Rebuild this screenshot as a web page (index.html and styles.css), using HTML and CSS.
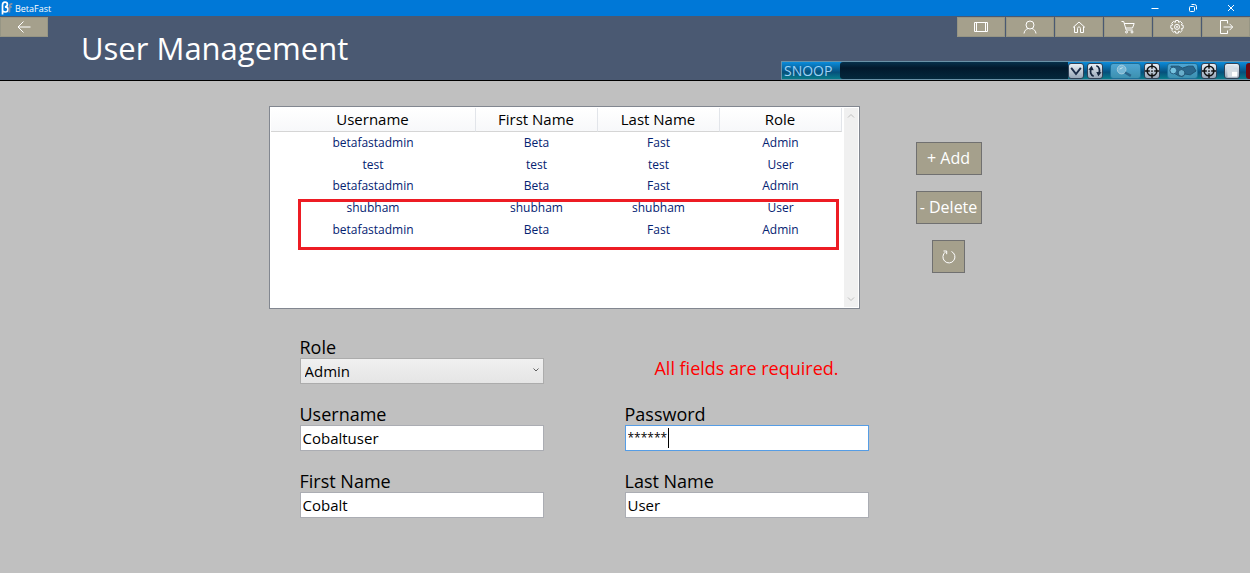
FILE: index.html
```html
<!DOCTYPE html>
<html lang="en">
<head>
<meta charset="utf-8">
<title>BetaFast</title>
<link rel="stylesheet" href="styles.css">
</head>
<body>
<div class="titlebar">
  <svg class="app-logo" viewBox="0 0 12 14" aria-hidden="true">
    <path d="M1.500 13.500V4.200C1.500 2.200 2.600 1.200 4 1.200s2.400.9 2.400 2.200S5.400 5.600 4 5.800c1.900 0 3 1 3 2.500S5.900 11 4.300 11c-1 0-1.800-.3-2.300-.8" fill="none" stroke="#fff" stroke-width="1.700"/>
    <path d="M8.300 11.500l.4-6.500c.1-1.500.8-2.200 2.600-2M7.700 6h3" fill="none" stroke="#8b8fa3" stroke-width="1.800"/>
  </svg>
  <span class="app-name">BetaFast</span>
  <div class="window-controls">
    <button type="button" aria-label="Minimize"><svg viewBox="0 0 10 10"><path d="M1.500 5.500h7"/></svg></button>
    <button type="button" aria-label="Restore"><svg viewBox="0 0 10 10"><rect x="1.500" y="3.500" width="5" height="5" rx="1"/><path d="M3.500 1.500h3a2 2 0 0 1 2 2v3"/></svg></button>
    <button type="button" aria-label="Close"><svg viewBox="0 0 10 10"><path d="M2 2l6 6M8 2L2 8"/></svg></button>
  </div>
</div>

<header class="header">
  <button class="tile" type="button" aria-label="Back"><svg viewBox="0 0 16 16"><path d="M14.500 8H2M7.500 2.500L2 8l5.500 5.500"/></svg></button>
  <h1>User Management</h1>
  <nav class="nav" aria-label="Main">
    <button class="tile" type="button" aria-label="Movies"><svg viewBox="0 0 16 16"><path d="M1.500 3.500h13v9h-13zM3.500 3.500v9M12.500 3.500v9"/></svg></button>
    <button class="tile" type="button" aria-label="Account"><svg viewBox="0 0 16 16"><circle cx="8" cy="6" r="4"/><path d="M2 14.500c.4-2.600 1.800-4.200 4-5M14 14.500c-.4-2.600-1.800-4.200-4-5"/></svg></button>
    <button class="tile" type="button" aria-label="Home"><svg viewBox="0 0 16 16"><path d="M2 8.500l6-5.500 6 5.500M3.500 7.500v6h3v-4c0-1 .6-1.500 1.500-1.500s1.500.5 1.500 1.500v4h3v-6"/></svg></button>
    <button class="tile" type="button" aria-label="Cart"><svg viewBox="0 0 16 16"><path d="M1.500 2.500h2.200l2.500 8.500h6.500M4.200 4.500h10l-1.700 4.500H5.600"/><circle cx="6.500" cy="13" r="1"/><circle cx="12" cy="13" r="1"/></svg></button>
    <button class="tile" type="button" aria-label="Settings"><svg viewBox="0 0 16 16"><path d="M6.700 1.500h2.600l.4 1.900 1.700-1 1.900 1.900-1 1.700 1.900.4v2.800l-1.900.4 1 1.700-1.900 1.900-1.700-1-.4 1.900H6.700l-.4-1.900-1.700 1-1.900-1.900 1-1.700-1.900-.4V6.400L3.700 6l-1-1.700 1.900-1.900 1.700 1z"/><circle cx="8" cy="7.900" r="2.500"/><circle cx="8" cy="7.900" r=".6"/></svg></button>
    <button class="tile" type="button" aria-label="Log out"><svg viewBox="0 0 16 16"><path d="M9.500 4.500v-3h-7v13h7v-3M5.500 8h9M11.500 4.800L14.700 8l-3.200 3.200"/></svg></button>
  </nav>
</header>

<div class="snoop">
  <span class="snoop-name">SNOOP</span>
  <div class="snoop-path"></div>
  <button type="button" class="snoop-btn" aria-label="Choose window"><svg viewBox="0 0 16 16"><path d="M2.500 4.500l5.500 7 5.500-7" fill="none" stroke="#1c2c48" stroke-width="2.200"/></svg></button>
  <button type="button" class="snoop-btn" aria-label="Refresh list"><svg viewBox="0 0 16 16"><path d="M6.500 14C3 13 2 9 3.500 5.500M9.500 2c3.500 1 4.500 5 3 8.500" fill="none" stroke="#14243c" stroke-width="2"/><path d="M.5 6.500L4.200 2 6.500 7zM15.500 9.500L11.800 14 9.500 9z" fill="#14243c"/></svg></button>
  <button type="button" class="snoop-btn wide" aria-label="Snoop"><svg viewBox="0 0 30 14"><circle cx="11" cy="5.500" r="4.500" fill="#78b8d6" stroke="#a6cbdc"/><path d="M14.500 8.500l6 3.500" stroke="#2a6489" stroke-width="2.500"/><path d="M9 5l3-1.500" stroke="#cde9f3"/></svg></button>
  <button type="button" class="snoop-btn" aria-label="Snoop target"><svg viewBox="0 0 16 16"><circle cx="8" cy="8" r="5.500" fill="none" stroke="#111" stroke-width="1.800"/><path d="M8 0v5.500M8 10.500V16M0 8h5.500M10.500 8H16" stroke="#111" stroke-width="1.600"/><circle cx="8" cy="8" r="1" fill="#111"/></svg></button>
  <button type="button" class="snoop-btn wide" aria-label="Magnify"><svg viewBox="0 0 30 14"><path d="M3 2h8l4 2 6-2h5l3 5-6 4-6-1-2 3-4-1-5-3z" fill="#2a668b" stroke="#205473"/><circle cx="5.500" cy="6.500" r="3.500" fill="#76c2df" stroke="#265b7d"/><circle cx="14" cy="9" r="3.500" fill="#69aecb" stroke="#205473"/></svg></button>
  <button type="button" class="snoop-btn" aria-label="Magnify target"><svg viewBox="0 0 16 16"><circle cx="8" cy="8" r="5.500" fill="none" stroke="#111" stroke-width="1.800"/><path d="M8 0v5.500M8 10.500V16M0 8h5.500M10.500 8H16" stroke="#111" stroke-width="1.600"/><circle cx="8" cy="8" r="1" fill="#111"/></svg></button>
  <button type="button" class="snoop-btn last" aria-label="Options"><svg viewBox="0 0 16 16"><path d="M2 2h8v4h4v9H3z" fill="#d5dce3"/><rect x="8" y="9" width="6" height="5" fill="#fff"/></svg></button>
  <button type="button" class="snoop-close" aria-label="Close Snoop"></button>
</div>

<main class="page">
  <section class="list">
    <table>
      <colgroup><col class="col-wide"><col><col><col></colgroup>
      <thead><tr><th>Username</th><th>First Name</th><th>Last Name</th><th>Role</th></tr></thead>
      <tbody>
        <tr><td>betafastadmin</td><td>Beta</td><td>Fast</td><td>Admin</td></tr>
        <tr><td>test</td><td>test</td><td>test</td><td>User</td></tr>
        <tr><td>betafastadmin</td><td>Beta</td><td>Fast</td><td>Admin</td></tr>
        <tr><td>shubham</td><td>shubham</td><td>shubham</td><td>User</td></tr>
        <tr><td>betafastadmin</td><td>Beta</td><td>Fast</td><td>Admin</td></tr>
      </tbody>
    </table>
    <div class="scrollbar" aria-hidden="true">
      <svg viewBox="0 0 8 6"><path d="M1 4.500l3-3 3 3"/></svg>
      <svg viewBox="0 0 8 6"><path d="M1 1.500l3 3 3-3"/></svg>
    </div>
    <div class="highlight"></div>
  </section>

  <aside class="actions">
    <button type="button">+ Add</button>
    <button type="button">- Delete</button>
    <button type="button" class="square" aria-label="Refresh"><svg viewBox="0 0 16 16"><path d="M10.500 2.500A6 6 0 1 1 4.500 3M2.500 2h3.200v3.200"/></svg></button>
  </aside>

  <form class="form">
    <div class="field">
      <label for="role">Role</label>
      <div class="control">
        <select id="role"><option>Admin</option><option>User</option></select>
        <svg class="chevron" viewBox="0 0 8 6" aria-hidden="true"><path d="M1.500 1.500L4 4l2.500-2.500"/></svg>
      </div>
    </div>
    <p class="message">All fields are required.</p>
    <div class="field">
      <label for="username">Username</label>
      <input id="username" type="text" value="Cobaltuser">
    </div>
    <div class="field">
      <label for="password">Password</label>
      <div class="control">
        <input id="password" class="active" type="text" value="******" autocomplete="off">
        <span class="caret"></span>
      </div>
    </div>
    <div class="field">
      <label for="first">First Name</label>
      <input id="first" type="text" value="Cobalt">
    </div>
    <div class="field">
      <label for="last">Last Name</label>
      <input id="last" type="text" value="User">
    </div>
  </form>
</main>
</body>
</html>
```
FILE: styles.css
```css
* { box-sizing: border-box; }
body {
  margin: 0;
  min-height: 100vh;
  position: relative;
  background: #c0c0c0;
  color: #000;
  font-family: "Open Sans", "Noto Sans", sans-serif;
}
button, input, select { font: inherit; color: inherit; margin: 0; padding: 0; border: 0; border-radius: 0; }
svg { display: block; }

.titlebar {
  display: flex;
  align-items: center;
  height: 16px;
  background: #0078d7;
  color: #fff;
  font-size: 9px;
}
.app-logo { width: 12px; height: 14px; margin: 0 2px 0 1px; }
.window-controls { display: flex; margin-left: auto; }
.window-controls button { width: 38px; height: 16px; display: grid; place-items: center; background: none; }
.window-controls svg { width: 10px; height: 10px; fill: none; stroke: #fff; stroke-width: 1; }

.header {
  display: flex;
  align-items: flex-start;
  height: 65px;
  background: #4a5972;
  border-bottom: 1px solid #000;
  padding-top: 1px;
}
.header h1 {
  margin: 8px 0 0 33px;
  color: #fff;
  font-size: 31px;
  line-height: 46px;
  font-weight: 400;
}
.nav { display: flex; gap: 1px; margin-left: auto; }
.tile {
  width: 48px;
  height: 20px;
  display: grid;
  place-items: center;
  background: #a5a08c;
  border: 1px solid #969584;
}
.tile svg { width: 16px; height: 16px; fill: none; stroke: #fff; stroke-width: 1; }

.snoop {
  position: absolute;
  top: 61px;
  right: 0;
  width: 469px;
  height: 19px;
  display: flex;
  align-items: center;
  overflow: hidden;
  background: linear-gradient(#0b8cdc, #06507c 60%, #087d8c);
  border: solid #6a92a8;
  border-width: 1px 0 1px 1px;
}
.snoop-name { width: 58px; padding-left: 2px; color: #9dd0f5; font-size: 14px; line-height: 17px; }
.snoop-path { flex: 1; height: 17px; background: linear-gradient(#06304b, #02192d 35%, #04283c); border-radius: 3px 0 0 3px; }
.snoop-btn {
  width: 16px;
  height: 16px;
  margin-right: 3px;
  flex: none;
  border: 1px solid #2f4258;
  border-radius: 3px;
  background: linear-gradient(#e8eef4, #97a6b8);
}
.snoop-btn svg { width: 100%; height: 100%; }
.snoop-btn.wide { width: 31px; margin-left: 4px; background: linear-gradient(#4fa5d3, #3d91b0); border-color: #1d719c; }
.snoop-btn.last { margin: 0 6px 0 4px; }
.snoop-close { width: 4px; height: 16px; background: #6d0a10; border-radius: 3px 0 0 3px; }

.page {
  display: grid;
  grid-template-columns: 591px 66px;
  column-gap: 56px;
  row-gap: 28px;
  justify-content: center;
  align-items: start;
  padding: 25px 16px;
}

.list {
  position: relative;
  display: flex;
  justify-content: space-between;
  min-height: 203px;
  background: #fff;
  border: 1px solid #828790;
  padding: 1px;
}
.list table {
  flex: none;
  width: 571px;
  height: 132px;
  table-layout: fixed;
  border-collapse: separate;
  border-spacing: 0;
  align-self: flex-start;
  text-align: center;
}
.col-wide { width: 205px; }
.list th {
  height: 24px;
  padding: 0;
  font-size: 15px;
  line-height: 23px;
  font-weight: 400;
  background: linear-gradient(#fff, #f7f8fa);
  border-right: 1px solid #e2e5ea;
  border-bottom: 1px solid #d5d5d5;
}
.list td { padding: 0; font-size: 12px; line-height: 21px; color: #042271; }
.scrollbar {
  width: 14px;
  display: flex;
  flex-direction: column;
  justify-content: space-between;
  align-items: center;
  padding: 5px 0;
  background: #f0f0f0;
}
.scrollbar svg { width: 8px; height: 6px; fill: none; stroke: #bfbfbf; }
.highlight {
  position: absolute;
  left: 28px;
  right: 20px;
  top: 92px;
  height: 51px;
  border: 3px solid #ed1c24;
}

.actions { display: flex; flex-direction: column; align-items: center; gap: 16px; padding-top: 36px; }
.actions button {
  width: 66px;
  height: 33px;
  display: grid;
  place-items: center;
  background: #a5a08c;
  border: 1px solid #707070;
  color: #fff;
  font-size: 16px;
  line-height: 31px;
  white-space: nowrap;
}
.actions .square { width: 33px; }
.actions svg { width: 16px; height: 16px; fill: none; stroke: #fff; stroke-width: 1; }

.form {
  grid-column: 1 / -1;
  display: grid;
  grid-template-columns: 244px 244px;
  column-gap: 81px;
  row-gap: 20px;
  padding-left: 31px;
}
.field { display: flex; flex-direction: column; }
.field label { font-size: 18px; line-height: 20px; height: 21px; }
.control { position: relative; }
.form input, .form select {
  display: block;
  width: 100%;
  height: 26px;
  background: #fff;
  border: 1px solid #abadb3;
  padding: 0 2px;
  font-size: 15px;
}
.form select { appearance: none; padding: 0 4px; background: linear-gradient(#f0f0f0, #e5e5e5); border-color: #acacac; }
.form input.active { border-color: #569de5; font-size: 12px; padding-bottom: 2px; }
.chevron { position: absolute; right: 4px; top: 9px; width: 8px; height: 6px; fill: none; stroke: #606060; }
.caret { position: absolute; left: 43px; top: 3px; width: 1px; height: 20px; background: #000; }
.message { margin: 0; align-self: end; text-align: center; color: #ff0000; font-size: 18px; line-height: 32px; }
```
